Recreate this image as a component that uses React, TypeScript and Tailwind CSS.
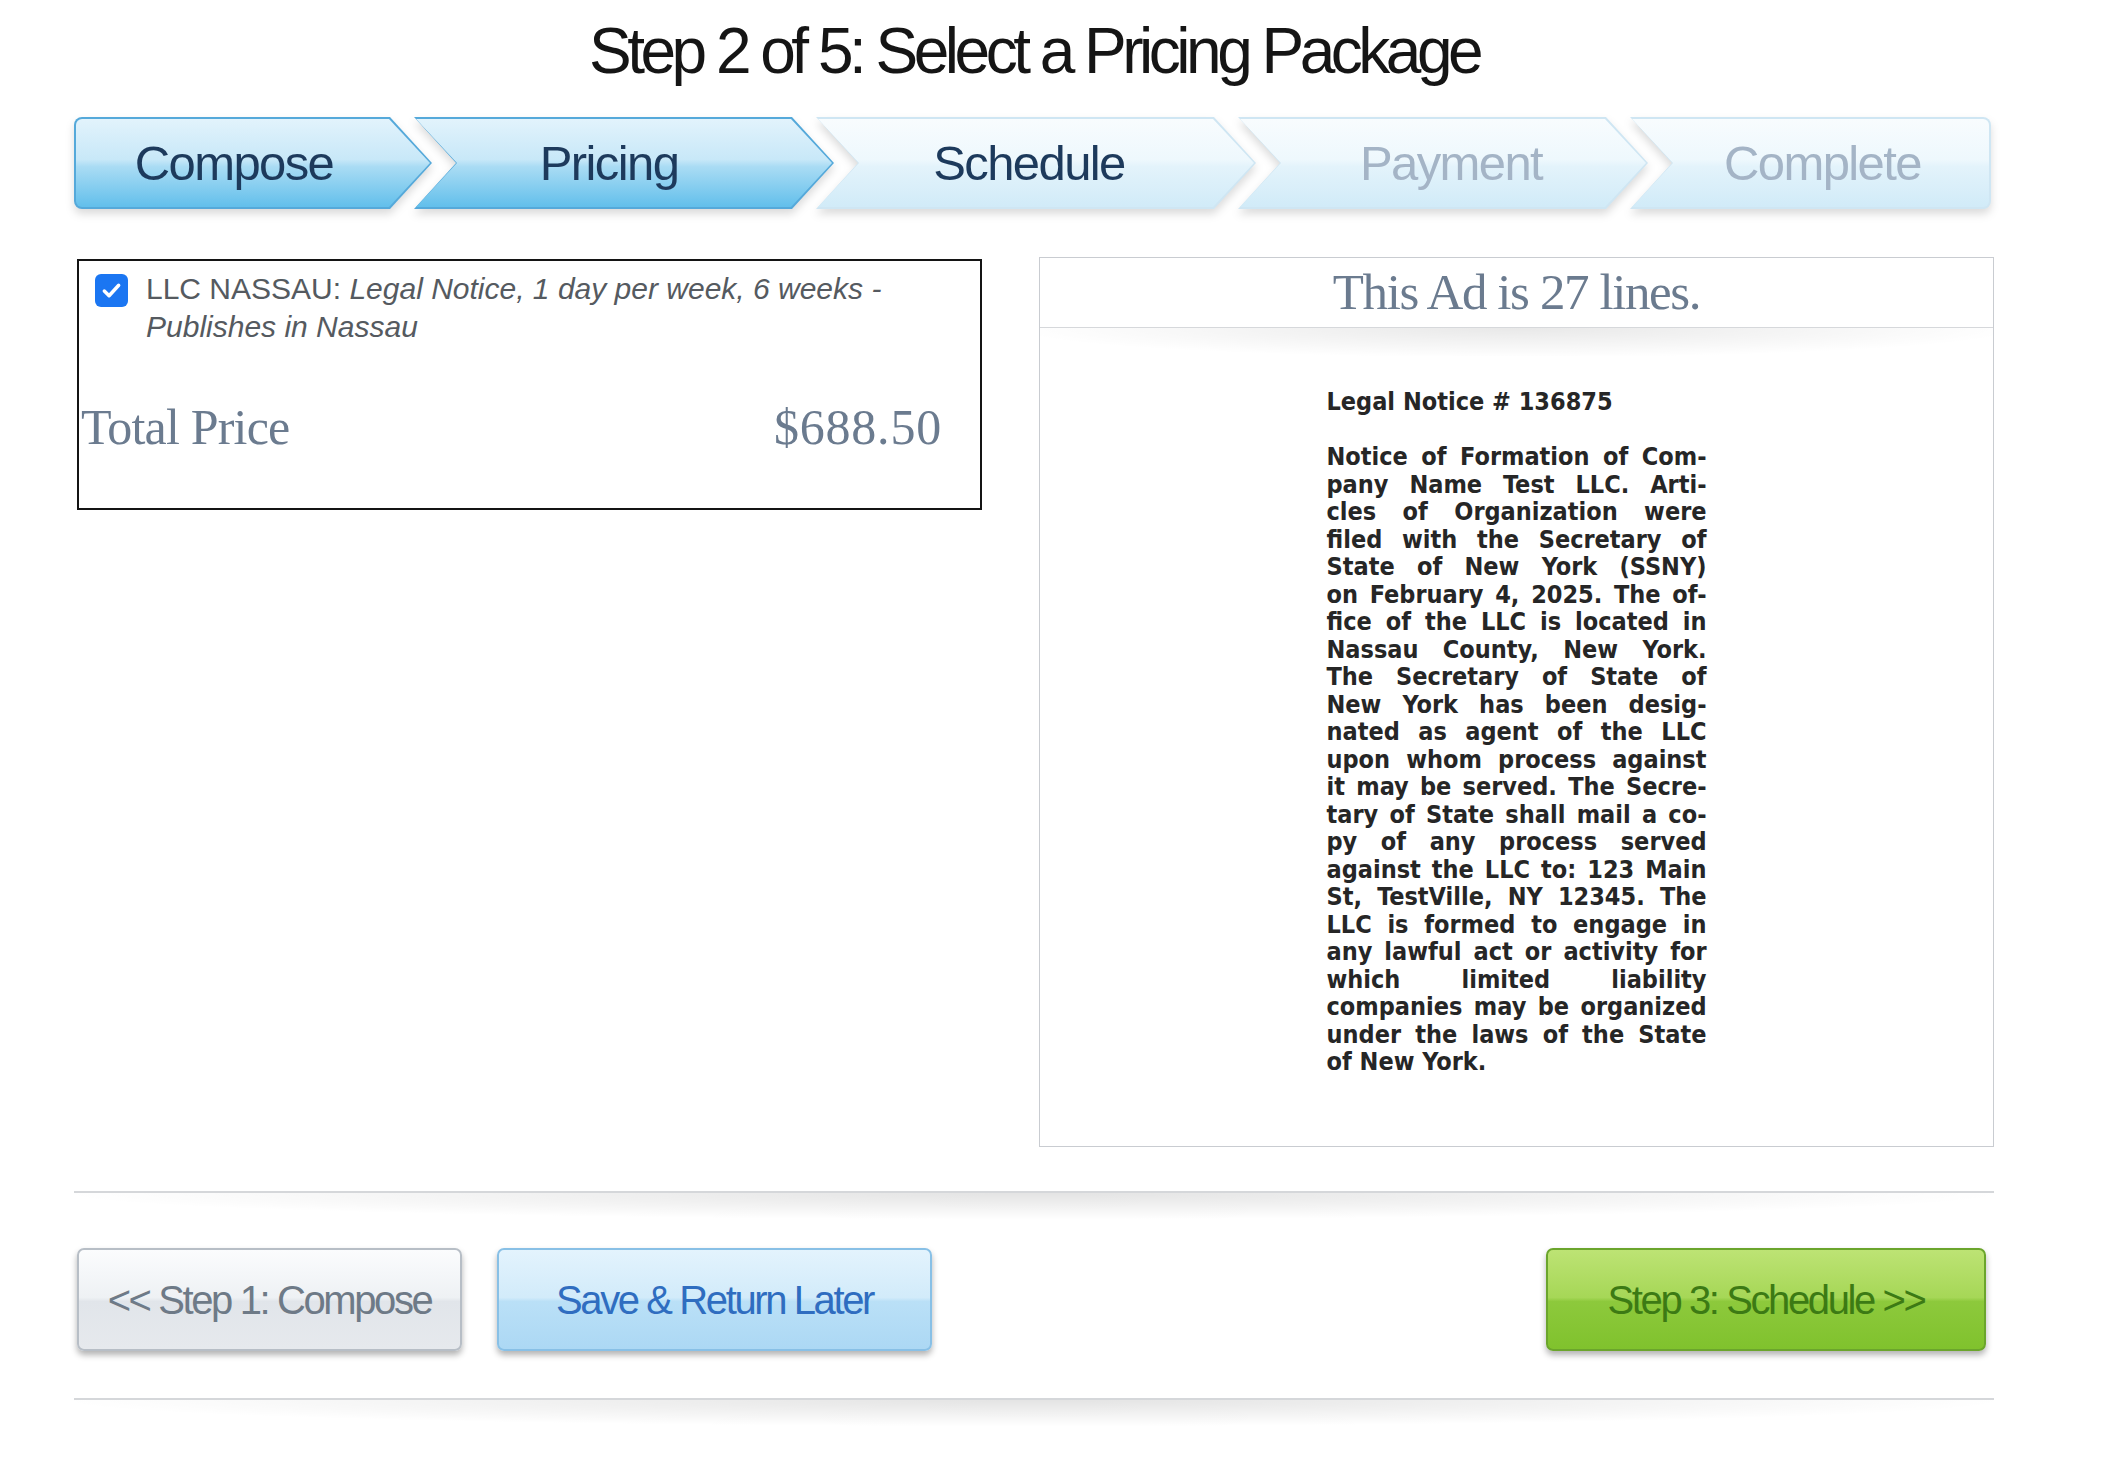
import React from "react";

const sans = "font-['Liberation_Sans',Arial,Helvetica,sans-serif]";
const serif = "font-['Liberation_Serif','Times_New_Roman',serif]";

type Seg = {
  label: string;
  outer: string;
  inner: string;
  text: string;
};

const CLIP_FIRST_O = "[clip-path:polygon(0_0,calc(100%_-_42px)_0,100%_50%,calc(100%_-_42px)_100%,0_100%)]";
const CLIP_FIRST_I = "[clip-path:polygon(0_0,calc(100%_-_41px)_0,100%_50%,calc(100%_-_41px)_100%,0_100%)]";
const CLIP_MID_O = "[clip-path:polygon(0_0,calc(100%_-_42px)_0,100%_50%,calc(100%_-_42px)_100%,0_100%,42px_50%)]";
const CLIP_MID_I = "[clip-path:polygon(0_0,calc(100%_-_41px)_0,100%_50%,calc(100%_-_41px)_100%,0_100%,41px_50%)]";
const CLIP_LAST_O = "[clip-path:polygon(0_0,100%_0,100%_100%,0_100%,42px_50%)]";
const CLIP_LAST_I = "[clip-path:polygon(0_0,100%_0,100%_100%,0_100%,41px_50%)]";

const ACTIVE_BG = "bg-[linear-gradient(180deg,#e2f3fc_0%,#c8e8f8_46%,#aadcf4_54%,#62bfeb_100%)]";
const IDLE_BG = "bg-[linear-gradient(180deg,#f8fcfe_0%,#eef8fd_46%,#e3f3fb_54%,#d1ebf8_100%)]";

const segs: Seg[] = [
  {
    label: "Compose",
    outer: `w-[358px] rounded-l-[8px] bg-[#55a9da] ${CLIP_FIRST_O}`,
    inner: `rounded-l-[6px] ${ACTIVE_BG} ${CLIP_FIRST_I} pr-[38px]`,
    text: "text-[#1d3a5c]",
  },
  {
    label: "Pricing",
    outer: `w-[420px] ml-[-18px] bg-[#55a9da] ${CLIP_MID_O}`,
    inner: `${ACTIVE_BG} ${CLIP_MID_I} pr-[30px]`,
    text: "text-[#1d3a5c]",
  },
  {
    label: "Schedule",
    outer: `w-[440px] ml-[-18px] bg-[#cfe6f3] ${CLIP_MID_O}`,
    inner: `${IDLE_BG} ${CLIP_MID_I} pr-[14px]`,
    text: "text-[#1d3a5c]",
  },
  {
    label: "Payment",
    outer: `w-[410px] ml-[-18px] bg-[#cfe6f3] ${CLIP_MID_O}`,
    inner: `${IDLE_BG} ${CLIP_MID_I} pl-[16px]`,
    text: "text-[#a4b4c6]",
  },
  {
    label: "Complete",
    outer: `w-[361px] ml-[-18px] rounded-r-[8px] bg-[#cfe6f3] ${CLIP_LAST_O}`,
    inner: `rounded-r-[6px] ${IDLE_BG} ${CLIP_LAST_I} pl-[24px]`,
    text: "text-[#a4b4c6]",
  },
];

const noticeLines: string[] = [
  "Notice of Formation of Com-",
  "pany Name Test LLC. Arti-",
  "cles of Organization were",
  "filed with the Secretary of",
  "State of New York (SSNY)",
  "on February 4, 2025. The of-",
  "fice of the LLC is located in",
  "Nassau County, New York.",
  "The Secretary of State of",
  "New York has been desig-",
  "nated as agent of the LLC",
  "upon whom process against",
  "it may be served. The Secre-",
  "tary of State shall mail a co-",
  "py of any process served",
  "against the LLC to: 123 Main",
  "St, TestVille, NY 12345. The",
  "LLC is formed to engage in",
  "any lawful act or activity for",
  "which limited liability",
  "companies may be organized",
  "under the laws of the State",
];

function Divider() {
  return (
    <div className="relative h-[2px] bg-[#d5d7da]">
      <div className="absolute left-0 right-0 top-[2px] h-[26px] bg-[radial-gradient(ellipse_at_top,rgba(0,0,0,0.11),rgba(0,0,0,0)_72%)]" />
    </div>
  );
}

export default function App() {
  return (
    <div className={`w-[2110px] min-h-[1460px] bg-white ${sans}`}>
      <div className="ml-[74px] w-[1920px] pt-[19px]">
        <h1 className="text-center text-[64px] leading-[64px] tracking-[-4.5px] text-[#151515] font-normal">
          Step 2 of 5: Select a Pricing Package
        </h1>

        {/* Step bar */}
        <div className="mt-[34px] flex h-[92px] [filter:drop-shadow(0_5px_4px_rgba(0,0,0,0.14))]">
          {segs.map((s) => (
            <div key={s.label} className={`h-[92px] shrink-0 p-[2px] ${s.outer}`}>
              <div className={`flex h-full w-full items-center justify-center ${s.inner}`}>
                <span className={`text-[49px] leading-none tracking-[-1.6px] ${s.text}`}>{s.label}</span>
              </div>
            </div>
          ))}
        </div>

        {/* Panels */}
        <div className="mt-[48px] flex items-start justify-between">
          <div className="mt-[2px] ml-[3px] flex h-[251px] w-[905px] flex-col border-2 border-[#141414]">
            <div className="flex items-start pl-[16px] pr-[8px] pt-[9px]">
              <div className="mt-[4px] flex h-[33px] w-[33px] shrink-0 items-center justify-center rounded-[6px] bg-[#1b76f2]">
                <svg width="23" height="23" viewBox="0 0 24 24" fill="none">
                  <path d="M4.5 12.5l5 5L19.5 6.5" stroke="#fff" strokeWidth="3.6" strokeLinecap="round" strokeLinejoin="round" />
                </svg>
              </div>
              <div className="ml-[18px] flex flex-col text-[30px] leading-[38px] text-[#555a60]">
                <div>
                  LLC NASSAU: <em>Legal Notice, 1 day per week, 6 weeks -</em>
                </div>
                <em>Publishes in Nassau</em>
              </div>
            </div>
            <div className={`mt-[56px] flex items-baseline justify-between pl-[2px] pr-[38px] ${serif} text-[50px] leading-[50px] text-[#6b7b8f]`}>
              <span className="tracking-[-0.8px]">Total Price</span>
              <span className="tracking-[0.8px]">$688.50</span>
            </div>
          </div>

          <div className="flex h-[890px] w-[955px] flex-col border border-[#c9ccd1]">
            <div className={`flex h-[70px] shrink-0 items-center justify-center border-b border-[#d6d8db] ${serif} text-[51px] leading-none tracking-[-1.4px] text-[#6b7b8f]`}>
              This Ad is 27 lines.
            </div>
            <div className="h-[28px] shrink-0 bg-[radial-gradient(ellipse_at_top,rgba(0,0,0,0.09),rgba(0,0,0,0)_75%)]" />
            <div className="mx-auto mt-[32px] w-[380px] font-['DejaVu_Sans_Condensed','DejaVu_Sans',sans-serif] font-bold text-[25px] leading-[27.5px] text-[#262626]">
              <div>Legal Notice # 136875</div>
              <div className="h-[27.5px]" />
              {noticeLines.map((l, i) => (
                <div key={i} className="text-justify [text-align-last:justify]">
                  {l}
                </div>
              ))}
              <div>of New York.</div>
            </div>
          </div>
        </div>

        <div className="mt-[44px]">
          <Divider />
        </div>

        {/* Buttons */}
        <div className="mt-[55px] flex items-center">
          <button className="ml-[3px] flex h-[103px] w-[385px] items-center justify-center rounded-[7px] border-2 border-[#b7bec6] bg-[linear-gradient(180deg,#fbfcfd_0%,#eef1f4_48%,#e1e5ea_52%,#e6e9ed_100%)] text-[40px] leading-none tracking-[-2.4px] text-[#6e7a87] shadow-[0_4px_6px_rgba(0,0,0,0.3)]">
            &lt;&lt; Step 1: Compose
          </button>
          <button className="ml-[35px] flex h-[103px] w-[435px] items-center justify-center rounded-[7px] border-2 border-[#88c0e6] bg-[linear-gradient(180deg,#e3f3fd_0%,#d2ebfa_48%,#bae0f7_52%,#acd8f4_100%)] text-[40px] leading-none tracking-[-2.4px] text-[#2f6dc0] shadow-[0_4px_6px_rgba(0,0,0,0.3)]">
            Save &amp; Return Later
          </button>
          <button className="ml-auto mr-[8px] flex h-[103px] w-[440px] items-center justify-center rounded-[7px] border-2 border-[#6ba52c] bg-[linear-gradient(180deg,#bde374_0%,#a6d757_48%,#8dc93c_52%,#80c22d_100%)] text-[40px] leading-none tracking-[-2.4px] text-[#3c7a14] shadow-[0_4px_6px_rgba(0,0,0,0.3)]">
            Step 3: Schedule &gt;&gt;
          </button>
        </div>

        <div className="mt-[47px]">
          <Divider />
        </div>
      </div>
    </div>
  );
}
